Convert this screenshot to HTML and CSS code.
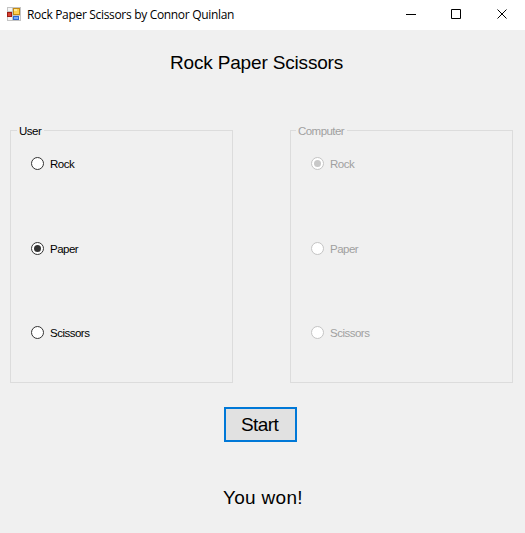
FILE: index.html
```html
<!DOCTYPE html>
<html lang="en">
<head>
<meta charset="utf-8">
<title>Rock Paper Scissors by Connor Quinlan</title>
<link rel="stylesheet" href="styles.css">
</head>
<body>
<header class="titlebar">
  <svg class="app-icon" width="14" height="14" viewBox="0 0 14 14" shape-rendering="crispEdges">
    <rect width="14" height="14" fill="#c4c4c4"/>
    <path d="M1 1h4v3H1zM1 10h4v3H1zM12 9h1v4h-1z" fill="#f4f4f4"/>
    <rect x="0" y="5" width="5" height="5" fill="#9c1c14"/><rect x="1" y="6" width="3" height="3" fill="#d84030"/>
    <rect x="6" y="1" width="7" height="7" fill="#c48a14"/><rect x="7" y="2" width="5" height="5" fill="#ffd050"/><rect x="7" y="2" width="3" height="2" fill="#ffe898"/>
    <rect x="6" y="9" width="6" height="4" fill="#2c68d0"/><rect x="7" y="10" width="4" height="2" fill="#78a8f8"/>
  </svg>
  <span class="caption">Rock Paper Scissors by Connor Quinlan</span>
  <svg class="controls" width="138" height="29" viewBox="0 0 138 29" fill="none" stroke="#000">
    <path d="M19 14.500h10M64.500 9.500h9v9h-9zM110.500 9.500l9 9M119.500 9.500l-9 9"/>
  </svg>
</header>
<main class="form">
  <h1 class="heading">Rock Paper Scissors</h1>
  <div class="groups">
    <fieldset class="group">
      <legend>User</legend>
      <label class="option"><i class="radio"></i><span>Rock</span></label>
      <label class="option"><i class="radio checked"></i><span>Paper</span></label>
      <label class="option"><i class="radio"></i><span>Scissors</span></label>
    </fieldset>
    <fieldset class="group disabled" disabled>
      <legend class="wide">Computer</legend>
      <label class="option"><i class="radio checked"></i><span>Rock</span></label>
      <label class="option"><i class="radio"></i><span>Paper</span></label>
      <label class="option"><i class="radio"></i><span>Scissors</span></label>
    </fieldset>
  </div>
  <button class="start">Start</button>
  <p class="result">You won!</p>
</main>
</body>
</html>
```
FILE: styles.css
```css
* { box-sizing: border-box; }
body { margin: 0; width: 525px; height: 533px; overflow: hidden; background: #f0f0f0; color: #000; font-family: "Liberation Sans", Arial, sans-serif; }
.titlebar { height: 30px; background: #fff; display: flex; align-items: center; }
.app-icon { margin: 0 0 2px 7px; }
.caption { margin: 0 0 2px 6px; font: 12px "Open Sans", sans-serif; letter-spacing: -0.32px; white-space: nowrap; }
.controls { margin: 0 0 1px auto; }
.form { display: flow-root; }
.heading { margin: 21px 0 0 170px; font-size: 19px; font-weight: 400; line-height: 24px; letter-spacing: -0.17px; }
.groups { display: flex; gap: 57px; margin: 49px 0 0 10px; }
.group { width: 223px; height: 259px; margin: 0; padding: 0 0 0 20px; border: 1px solid #dcdcdc; font-size: 11.5px; letter-spacing: -0.5px; }
legend { margin-left: -14px; padding: 1px 3px 0 2px; line-height: 12px; }
.wide { margin-left: -15px; letter-spacing: -0.55px; }
.option { display: flex; align-items: center; gap: 6px; height: 15px; margin-top: 70px; }
legend + .option { margin-top: 19px; }
.option:last-child { margin-top: 69px; }
.option span { padding-top: 1px; }
.radio { width: 13px; height: 13px; border: 1px solid #333; border-radius: 50%; background: #fff; display: grid; place-items: center; }
.checked::after { content: ""; width: 7px; height: 7px; border-radius: 50%; background: #333; }
.disabled { color: #a0a0a0; }
.disabled .radio { border-color: #c4c4c4; }
.disabled .checked::after { background: #c8c8c8; }
.start { display: block; width: 73px; height: 35px; margin: 24px 0 0 224px; padding: 0 2px 0 0; border: 2px solid #0078d7; background: #e1e1e1; font: 19px "Liberation Sans", sans-serif; letter-spacing: -0.6px; color: #000; }
.result { margin: 44px 0 0 223px; font-size: 19px; line-height: 24px; letter-spacing: 0.3px; }
```
